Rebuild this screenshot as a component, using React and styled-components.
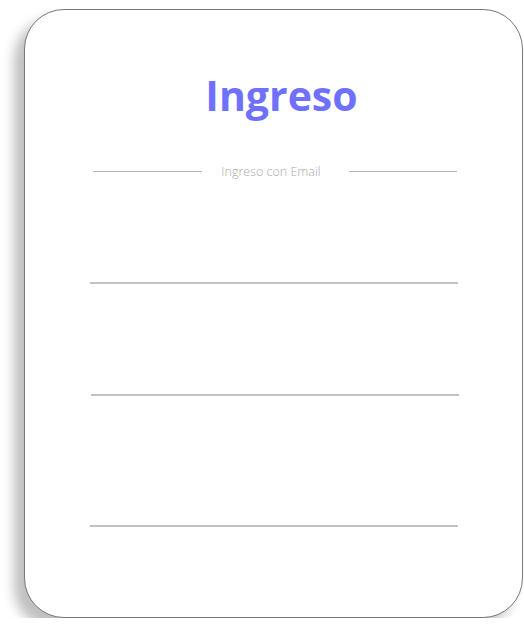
import React from 'react'
import styled, { createGlobalStyle } from 'styled-components'

const Global = createGlobalStyle`
  body {
    margin: 0;
    background: #fff;
    font-family: 'Open Sans', 'Noto Sans', sans-serif;
  }
`

const Card = styled.div`
  box-sizing: border-box;
  width: 499px;
  height: 609px;
  margin: 9px 0 0 24px;
  border: 1px solid #777;
  border-radius: 40px;
  background: #fff;
  box-shadow: -10px 10px 12px rgba(0, 0, 0, 0.25);
  padding: 0 65px;
  display: flex;
  flex-direction: column;
`

const Title = styled.h1`
  margin: 55px 0 0 16px;
  text-align: center;
  font-family: 'Open Sans', sans-serif;
  font-weight: 700;
  font-size: 41px;
  line-height: 60px;
  color: #7070ff;
`

const Divider = styled.div`
  display: grid;
  grid-template-columns: 1fr 147px 1fr;
  align-items: center;
  margin: 36px 0 0 3px;
  height: 20px;
`

const Line = styled.span`
  height: 1px;
  background: #b5b5b5;
`

const DividerText = styled.span`
  text-align: center;
  font-size: 12.5px;
  font-weight: 300;
  color: #aaa;
  padding-right: 8px;
`

const Field = styled.input`
  display: block;
  box-sizing: border-box;
  width: 368px;
  height: 40px;
  margin-top: ${p => p.$gap}px;
  margin-left: ${p => p.$shift || 0}px;
  border: none;
  border-bottom: 2px solid #c2c2c2;
  background: transparent;
  outline: none;
  font-family: inherit;
  font-size: 14px;
`

const App = () => {
  return (
    <>
      <Global />
      <Card>
        <Title>Ingreso</Title>
        <Divider>
          <Line />
          <DividerText>Ingreso con Email</DividerText>
          <Line />
        </Divider>
        <Field type="email" $gap={63} />
        <Field type="text" $gap={72} $shift={1} />
        <Field type="password" $gap={91} />
      </Card>
    </>
  )
}

export default App
